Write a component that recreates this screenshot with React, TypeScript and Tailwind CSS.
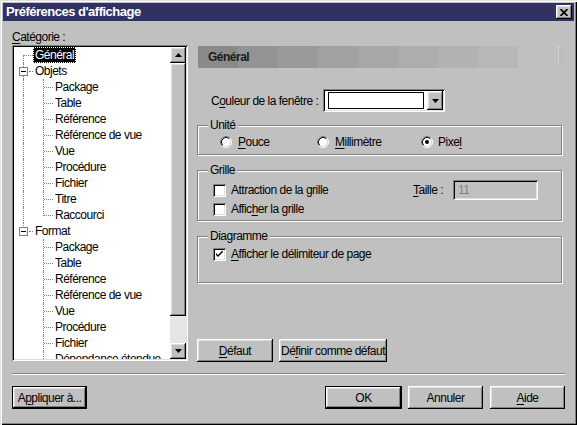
import type { ReactNode } from "react";

const raised =
  "shadow-[inset_-1px_-1px_0_#000,inset_1px_1px_0_#fff,inset_-2px_-2px_0_#808080,inset_2px_2px_0_#dfdfdf]";
const sunken =
  "shadow-[inset_1px_1px_0_#808080,inset_-1px_-1px_0_#fff,inset_2px_2px_0_#000,inset_-2px_-2px_0_#dfdfdf]";

type Line = "full" | "top" | "bottom" | "none";

interface Row {
  label: string;
  level: 0 | 1;
  v0: Line;
  v1?: Line;
  box?: boolean;
  selected?: boolean;
}

const objets = ["Package", "Table", "Référence", "Référence de vue", "Vue", "Procédure", "Fichier", "Titre", "Raccourci"];
const formats = ["Package", "Table", "Référence", "Référence de vue", "Vue", "Procédure", "Fichier", "Dépendance étendue"];

const rows: Row[] = [
  { label: "Général", level: 0, v0: "bottom", selected: true },
  { label: "Objets", level: 0, v0: "full", box: true },
  ...objets.map((label, i): Row => ({
    label,
    level: 1,
    v0: "full",
    v1: i === objets.length - 1 ? "top" : "full",
  })),
  { label: "Format", level: 0, v0: "top", box: true },
  ...formats.map((label): Row => ({ label, level: 1, v0: "none", v1: "full" })),
];

function Guide({ v, h, box }: { v: Line; h?: boolean; box?: boolean }) {
  return (
    <div className="relative w-[20px] h-4 shrink-0">
      {v === "full" && <div className="absolute left-[9px] top-0 bottom-0 border-l border-dotted border-[#808080]" />}
      {v === "top" && <div className="absolute left-[9px] top-0 h-[9px] border-l border-dotted border-[#808080]" />}
      {v === "bottom" && <div className="absolute left-[9px] top-[8px] bottom-0 border-l border-dotted border-[#808080]" />}
      {h && <div className="absolute left-[10px] top-[8px] w-[9px] border-t border-dotted border-[#808080]" />}
      {box && (
        <div className="absolute left-[5px] top-[4px] w-[9px] h-[9px] border border-[#808080] bg-white">
          <div className="absolute left-[1px] top-[3px] w-[5px] h-px bg-black" />
        </div>
      )}
    </div>
  );
}

function Arrow({ up }: { up?: boolean }) {
  return (
    <svg width="7" height="4" viewBox="0 0 7 4">
      <polygon points={up ? "3.5,0 7,4 0,4" : "0,0 7,0 3.5,4"} fill="#000" />
    </svg>
  );
}

function Tree() {
  return (
    <div className={`h-[316px] p-[2px] bg-white flex ${sunken}`}>
      <div className="flex-1 overflow-hidden">
        {rows.map((r, i) => (
          <div key={i} className="flex h-4 items-center">
            {r.level === 0 ? (
              <Guide v={r.v0} h={!r.box} box={r.box} />
            ) : (
              <>
                <Guide v={r.v0} />
                <Guide v={r.v1 ?? "none"} h />
              </>
            )}
            {r.level === 0 && r.box && (
              <div className="relative w-0 h-4">
                <div className="absolute -left-[5px] top-[8px] w-[4px] border-t border-dotted border-[#808080]" />
              </div>
            )}
            <span
              className={`-ml-px px-px h-4 leading-[14px] whitespace-nowrap border ${
                r.selected ? "bg-black text-white border-dotted border-white" : "border-transparent"
              }`}
            >
              {r.label}
            </span>
          </div>
        ))}
      </div>
      <div className="w-4 flex flex-col bg-[#e6e6e6]">
        <div className={`h-4 bg-[#c0c0c0] flex items-center justify-center ${raised}`}>
          <Arrow up />
        </div>
        <div className={`h-[253px] bg-[#c0c0c0] ${raised}`} />
        <div className="flex-1" />
        <div className={`h-4 bg-[#c0c0c0] flex items-center justify-center ${raised}`}>
          <Arrow />
        </div>
      </div>
    </div>
  );
}

function U({ children }: { children: ReactNode }) {
  return <span className="underline underline-offset-[2px]">{children}</span>;
}

function Group({ title, className, children }: { title: string; className: string; children: ReactNode }) {
  return (
    <div
      className={`relative w-[365px] border border-[#808080] shadow-[inset_1px_1px_0_#fff,1px_1px_0_#fff] ${className}`}
    >
      <span className="absolute left-[10px] -top-[8px] px-[2px] bg-[#c0c0c0] leading-[14px]">{title}</span>
      {children}
    </div>
  );
}

function Radio({ checked }: { checked?: boolean }) {
  return (
    <svg width="12" height="12" viewBox="0 0 12 12" className="shrink-0">
      <circle cx="6" cy="6" r="4.2" fill="#fff" />
      <path d="M2.11 9.89 A5.5 5.5 0 0 1 9.89 2.11" stroke="#808080" fill="none" />
      <path d="M9.89 2.11 A5.5 5.5 0 0 1 2.11 9.89" stroke="#fff" fill="none" />
      <path d="M2.82 9.18 A4.5 4.5 0 0 1 9.18 2.82" stroke="#000" fill="none" />
      <path d="M9.18 2.82 A4.5 4.5 0 0 1 2.82 9.18" stroke="#dfdfdf" fill="none" />
      {checked && <circle cx="6" cy="6" r="2" fill="#000" />}
    </svg>
  );
}

function Check({ checked }: { checked?: boolean }) {
  return (
    <div className={`w-[13px] h-[13px] shrink-0 bg-white flex items-center justify-center ${sunken}`}>
      {checked && (
        <svg width="7" height="7" viewBox="0 0 7 7">
          <path d="M0 2 L0 4 L2 6 L7 1 L7 -1 L2 4 Z" fill="#000" />
        </svg>
      )}
    </div>
  );
}

function Button({ children, def, className }: { children: ReactNode; def?: boolean; className: string }) {
  return (
    <div className={`h-[23px] ${def ? "border border-black" : ""} ${className}`}>
      <div className={`h-full bg-[#c0c0c0] flex items-center justify-center whitespace-nowrap ${raised}`}>
        {children}
      </div>
    </div>
  );
}

const tiles = ["#8a8a8a", "#939393", "#9a9a9a", "#a1a1a1", "#a7a7a7", "#adadad", "#b2b2b2", "#b7b7b7"];

export default function App() {
  return (
    <div
      className="w-[577px] h-[425px] p-[3px] bg-[#c0c0c0] text-black text-[12px] tracking-[-0.5px] font-['Liberation_Sans',Arial,sans-serif] shadow-[inset_1px_1px_0_#dfdfdf,inset_2px_2px_0_#fff,inset_-1px_-1px_0_#000,inset_-2px_-2px_0_#808080] flex flex-col"
    >
      <div className="h-[18px] bg-[#313163] flex items-center justify-between pl-[3px] pr-[2px]">
        <span className="text-white font-bold text-[13px] leading-[18px]">Préférences d'affichage</span>
        <div className={`w-4 h-[14px] bg-[#c0c0c0] flex items-center justify-center ${raised}`}>
          <svg width="8" height="7" viewBox="0 0 8 7">
            <path d="M0.5 0 L7.5 7 M7.5 0 L0.5 7" stroke="#000" strokeWidth="1.6" />
          </svg>
        </div>
      </div>

      <div className="h-[352px] flex pl-[9px]">
        <div className="w-[176px] flex flex-col">
          <div className="mt-[9px] h-[14px] leading-[14px] mb-px">
            <U>C</U>atégorie :
          </div>
          <Tree />
        </div>

        <div className="ml-[9px] w-[368px] flex flex-col">
          <div className="mt-[25px] h-[22px] ml-px flex">
            <div className="relative flex">
              {tiles.map((c) => (
                <div key={c} className="w-[40px] h-[22px]" style={{ backgroundColor: c }} />
              ))}
              <span className="absolute left-[10px] top-0 leading-[22px] font-bold text-[#1a1a1a]">Général</span>
            </div>
            <div className="ml-[40px] w-[5px] h-[20px] bg-[#bdbdbd] border-l border-dotted border-[#e0e0e0]" />
          </div>

          <div className="mt-[21px] h-[23px] flex items-center">
            <span className="pl-[14px] w-[126px]">
              C<U>o</U>uleur de la fenêtre :
            </span>
            <div className={`w-[122px] h-[23px] p-[2px] bg-white flex ${sunken}`}>
              <div className="flex-1 pl-[3px] pt-px">
                <div className="h-[17px] w-[96px] border border-black bg-white" />
              </div>
              <div className={`w-4 bg-[#c0c0c0] flex items-center justify-center ${raised}`}>
                <Arrow />
              </div>
            </div>
          </div>

          <Group title="Unité" className="mt-[13px] h-[30px]">
            <div className="mt-[9px] ml-[22px] h-[14px] flex items-center">
              <div className="w-[97px] flex items-center gap-[6px]">
                <Radio />
                <span>
                  <U>P</U>ouce
                </span>
              </div>
              <div className="w-[104px] flex items-center gap-[6px]">
                <Radio />
                <span>
                  <U>M</U>illimètre
                </span>
              </div>
              <div className="flex items-center gap-[5px]">
                <Radio checked />
                <span>
                  Pixe<U>l</U>
                </span>
              </div>
            </div>
          </Group>

          <Group title="Grille" className="mt-[15px] h-[51px]">
            <div className="mt-[9px] ml-[15px] h-[20px] flex items-center">
              <div className="w-[200px] flex items-center gap-[5px]">
                <Check />
                <span>Attraction de la grille</span>
              </div>
              <span className="w-[40px]">
                <U>T</U>aille :
              </span>
              <div className={`w-[85px] h-[20px] bg-[#c0c0c0] pl-[5px] leading-[20px] text-[#808080] ${sunken}`}>
                11
              </div>
            </div>
            <div className="mt-px ml-[15px] h-4 flex items-center gap-[5px]">
              <Check />
              <span>
                Affic<U>h</U>er la grille
              </span>
            </div>
          </Group>

          <Group title="Diagramme" className="mt-[15px] h-[47px]">
            <div className="mt-[9px] ml-[15px] h-4 flex items-center gap-[5px]">
              <Check checked />
              <span>
                <U>A</U>fficher le délimiteur de page
              </span>
            </div>
          </Group>

          <div className="mt-[56px] flex gap-[6px]">
            <Button className="w-[76px]">
              <U>D</U>éfaut
            </Button>
            <Button className="w-[108px]">
              Dé<U>f</U>inir comme défaut
            </Button>
          </div>
        </div>
      </div>

      <div className="mx-[9px] h-[2px] border-t border-[#808080] border-b border-b-white" />

      <div className="mt-[11px] px-[9px] flex justify-between">
        <Button def className="w-[75px]">
          A<U>p</U>pliquer à...
        </Button>
        <div className="flex">
          <Button def className="w-[77px]">
            OK
          </Button>
          <Button className="w-[75px] ml-[6px]">Annuler</Button>
          <Button className="w-[75px] ml-[7px]">
            <U>A</U>ide
          </Button>
        </div>
      </div>
    </div>
  );
}
